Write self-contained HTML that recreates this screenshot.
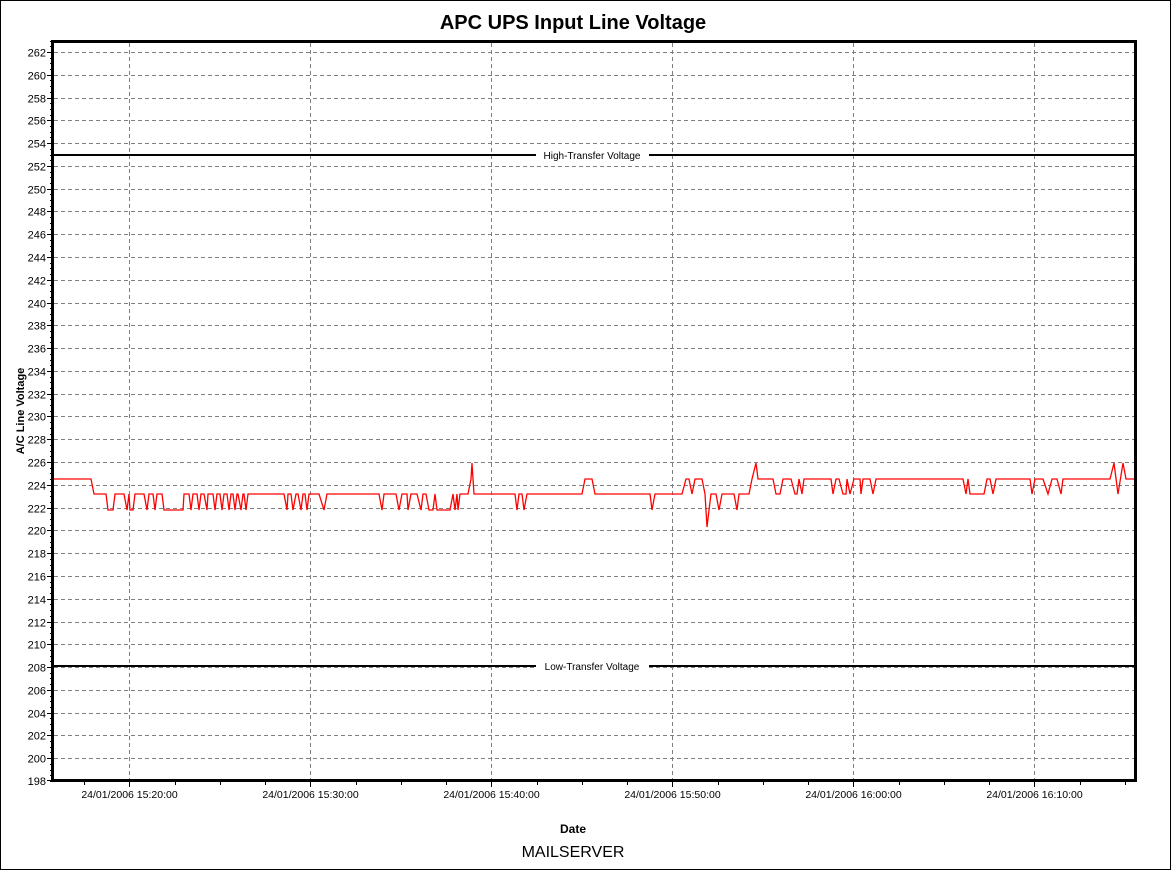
<!DOCTYPE html>
<html><head><meta charset="utf-8"><style>
html,body{margin:0;padding:0;background:#fff;}
svg{display:block;font-family:"Liberation Sans",Arial,sans-serif;}
</style></head><body>
<svg id="s" width="1171" height="870" viewBox="0 0 1171 870" xmlns="http://www.w3.org/2000/svg">
<rect x="0.5" y="0.5" width="1170" height="869" fill="#fff" stroke="#000" stroke-width="1"/>
<text x="573" y="29" text-anchor="middle" font-size="20" font-weight="bold">APC UPS Input Line Voltage</text>
<g id="grid"></g>
<line x1="53" y1="155" x2="1136" y2="155" stroke="#000" stroke-width="2"/>
<rect x="536" y="149" width="113" height="12" fill="#fff"/>
<text x="592" y="159" text-anchor="middle" font-size="10">High-Transfer Voltage</text>
<line x1="53" y1="666" x2="1136" y2="666" stroke="#000" stroke-width="2"/>
<rect x="536" y="660" width="113" height="12" fill="#fff"/>
<text x="592" y="670" text-anchor="middle" font-size="10">Low-Transfer Voltage</text>
<polyline fill="none" stroke="#f00" stroke-width="1.3" points="53,479 91,479 94,494 106,494 108,510 113,510 115,494 124,494 127,510 129,494 130,510 133,510 135,494 144,494 147,510 149,494 153,494 155,510 157,494 162,494 164,510 183,510 184,494 189,494 191,510 193,494 197,494 199,510 201,494 204,494 207,510 208,494 213,494 215,510 217,494 220,494 222,510 224,494 227,494 229,510 231,494 233,494 235,510 237,494 238,494 241,510 243,494 244,494 246,510 248,494 284,494 287,510 288,494 291,494 293,510 296,494 298,494 301,510 303,494 305,494 307,510 309,494 319,494 324,510 327,494 379,494 382,510 384,494 396,494 399,510 402,494 407,494 408,510 411,494 417,494 421,510 423,494 426,494 429,510 433,510 435,494 437,510 450,510 453,494 455,510 457,494 458,510 460,494 468,494 471,479 472,463 473,479 474,494 515,494 517,510 519,494 522,494 524,510 527,494 582,494 585,479 592,479 595,494 650,494 652,510 655,494 682,494 686,479 689,479 692,494 695,479 702,479 705,494 707,527 709,510 711,494 716,494 719,510 722,494 734,494 737,510 739,494 749,494 752,479 756,463 758,479 773,479 776,494 780,494 783,479 791,479 795,494 797,494 799,479 802,494 804,479 807,479 831,479 833,494 836,479 839,479 843,494 846,494 847,479 850,494 854,479 860,479 861,494 863,479 870,479 873,494 876,479 963,479 966,494 968,479 970,494 984,494 987,479 990,479 993,494 996,479 1030,479 1032,494 1035,479 1043,479 1048,494 1052,479 1057,479 1061,494 1063,479 1110,479 1114,463 1118,494 1123,463 1126,479 1135,479"/>
<rect x="52.5" y="41.5" width="1083" height="739" fill="none" stroke="#000" stroke-width="3"/>
<g id="lab" font-size="11"></g>
<text x="573" y="833" text-anchor="middle" font-size="12" font-weight="bold">Date</text>
<text x="573" y="857" text-anchor="middle" font-size="16">MAILSERVER</text>
<text transform="translate(24,411) rotate(-90)" text-anchor="middle" font-size="11" font-weight="bold">A/C Line Voltage</text>
</svg>
<script>
var ns="http://www.w3.org/2000/svg",g=document.getElementById("grid"),lab=document.getElementById("lab");
function el(p,t,a,txt){var e=document.createElementNS(ns,t);for(var k in a)e.setAttribute(k,a[k]);if(txt)e.textContent=txt;p.appendChild(e);return e;}
function Y(v){return 52+(262-v)*11.39;}
for(var v=200;v<=262;v+=2){var y=Math.round(Y(v))+0.5;
 el(g,"line",{x1:54,y1:y,x2:1135,y2:y,stroke:"#808080","stroke-dasharray":"4,3","stroke-width":1});
 el(lab,"line",{x1:47,y1:y,x2:53,y2:y,stroke:"#000"});
 el(lab,"text",{x:46,y:y+4,"text-anchor":"end"},""+v);}
el(lab,"line",{x1:47,y1:780.5,x2:53,y2:780.5,stroke:"#000"});
el(lab,"text",{x:46,y:785,"text-anchor":"end"},"198");
for(var v=198;v<=263;v+=0.5){var y=Math.round(Y(v))+0.5;if(y<41)continue;el(lab,"line",{x1:50,y1:y,x2:53,y2:y,stroke:"#000"});}
var xs=[129,310,491,672,853,1034],names=["15:20:00","15:30:00","15:40:00","15:50:00","16:00:00","16:10:00"];
for(var i=0;i<6;i++){var x=xs[i]+0.5;
 el(g,"line",{x1:x,y1:43,x2:x,y2:779,stroke:"#808080","stroke-dasharray":"4,3"});
 el(lab,"line",{x1:x,y1:781,x2:x,y2:787,stroke:"#000"});
 el(lab,"text",{x:x,y:798,"text-anchor":"middle","font-size":"10.5"},"24/01/2006 "+names[i]);}
for(var x=84;x<1136;x+=45.25){var xx=Math.round(x)+0.5;el(lab,"line",{x1:xx,y1:781,x2:xx,y2:785,stroke:"#000"});}
</script>
</body></html>
